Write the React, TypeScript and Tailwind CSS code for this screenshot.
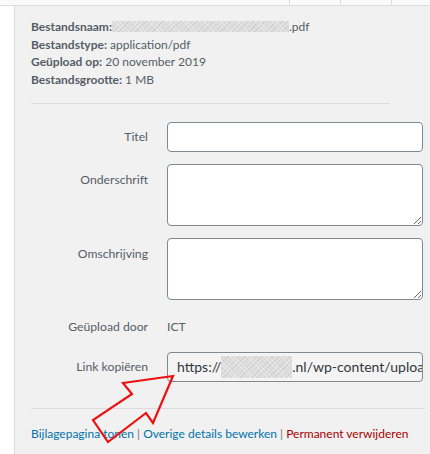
import React from "react";

const Blur = ({ w, h }: { w: number; h: number }) => (
  <span
    className="inline-block shrink-0 align-middle bg-[#dcdcdc] blur-[0.6px]"
    style={{
      width: w,
      height: h,
      backgroundImage:
        "repeating-linear-gradient(45deg, rgba(255,255,255,0.35) 0 1px, transparent 1px 3px), repeating-linear-gradient(-45deg, rgba(180,180,180,0.35) 0 1px, transparent 1px 4px)",
    }}
  />
);

export default function App() {
  return (
    <div
      className="relative w-[430px] h-[454px] overflow-hidden bg-white text-[#555d66]"
      style={{ fontFamily: 'Lato, "Open Sans", sans-serif' }}
    >
      {/* top strip */}
      <div className="flex h-[6px] border-b border-[#dcdcde] bg-[#fafafa]">
        <div className="w-[289px] shrink-0" />
        <div className="w-[51px] shrink-0 border-l border-[#dcdcde]" />
        <div className="w-[51px] shrink-0 border-l border-[#dcdcde]" />
        <div className="flex-1 border-l border-[#dcdcde]" />
      </div>
      <div className="flex h-[448px]">
        <div className="w-[14px] shrink-0 bg-white" />
        <div className="min-w-0 flex-1 border-l border-[#dcdcde] bg-[#f1f1f1] pl-[16px] pt-[12px]">
          {/* details */}
          <div className="text-[12px] leading-[17.6px]">
            <div className="flex items-center">
              <span className="font-bold">Bestandsnaam:</span>
              <Blur w={177} h={11} />
              <span>.pdf</span>
            </div>
            <div>
              <span className="font-bold">Bestandstype:</span> application/pdf
            </div>
            <div>
              <span className="font-bold">Geüpload op:</span> 20 november 2019
            </div>
            <div>
              <span className="font-bold">Bestandsgrootte:</span> 1 MB
            </div>
          </div>
          <div className="mt-[15px] w-[359px] border-t border-[#dcdcde]" />

          {/* form */}
          <div className="mt-[18px] text-[12.2px] leading-[18px]">
            <div className="flex items-start">
              <div className="w-[118px] shrink-0 pr-[1px] pt-[6px] text-right">Titel</div>
              <div className="ml-[18px] h-[30px] w-[256px] shrink-0 rounded-[4px] border border-[#7e8993] bg-white" />
            </div>
            <div className="mt-[12px] flex items-start">
              <div className="w-[118px] shrink-0 pr-[1px] pt-[7px] text-right">Onderschrift</div>
              <textarea className="ml-[18px] block h-[62px] w-[256px] shrink-0 rounded-[4px] border border-[#7e8993] bg-white outline-none" />
            </div>
            <div className="mt-[12px] flex items-start">
              <div className="w-[118px] shrink-0 pr-[1px] pt-[7px] text-right">Omschrijving</div>
              <textarea className="ml-[18px] block h-[62px] w-[256px] shrink-0 rounded-[4px] border border-[#7e8993] bg-white outline-none" />
            </div>
            <div className="mt-[12px] flex items-start">
              <div className="w-[118px] shrink-0 pr-[1px] pt-[6px] text-right">Geüpload door</div>
              <div className="ml-[18px] pt-[6px]">ICT</div>
            </div>
            <div className="mt-[16px] flex items-start">
              <div className="w-[118px] shrink-0 pr-[1px] pt-[6px] text-right">Link kopiëren</div>
              <div className="ml-[18px] flex h-[30px] w-[256px] shrink-0 items-center overflow-hidden whitespace-nowrap rounded-[4px] border border-[#7e8993] bg-[#f4f4f4] pl-[9px] text-[14px] text-[#32373c]">
                <span className="shrink-0">https://</span>
                <Blur w={71} h={22} />
                <span className="shrink-0">.nl/wp-content/uploads/2019/11/</span>
              </div>
            </div>
          </div>

          <div className="mt-[26px] w-[394px] border-t border-[#dcdcde]" />
          <div className="mt-[16px] text-[12px] leading-[18px] whitespace-nowrap">
            <span className="text-[#0073aa]">Bijlagepagina tonen</span>
            <span className="text-[#72777c]"> | </span>
            <span className="text-[#0073aa]">Overige details bewerken</span>
            <span className="text-[#72777c]"> | </span>
            <span className="text-[#a00]">Permanent verwijderen</span>
          </div>
        </div>
      </div>

      {/* red arrow annotation */}
      <svg
        className="pointer-events-none absolute left-0 top-0"
        width="430"
        height="454"
        viewBox="0 0 430 454"
      >
        <polygon
          points="173,376 123,383 132,394 93,420 108,442 146,413 153,423"
          fill="none"
          stroke="#ee1111"
          strokeWidth="2.2"
          strokeLinejoin="miter"
        />
      </svg>
    </div>
  );
}
